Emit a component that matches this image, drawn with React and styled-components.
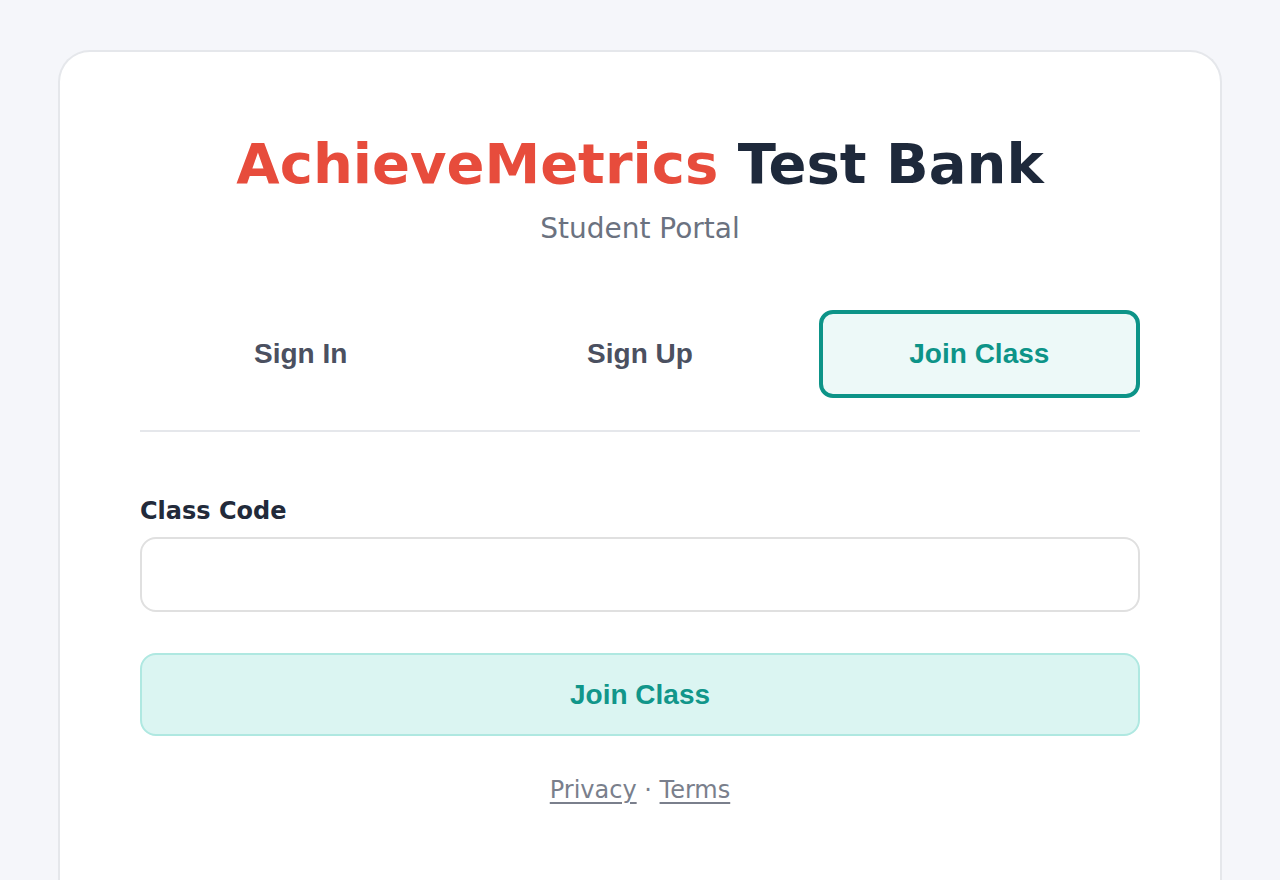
import React, { useState } from 'react'
import styled, { createGlobalStyle } from 'styled-components';

const GlobalStyle = createGlobalStyle`
  html, body {
    margin: 0;
    padding: 0;
    background: #f5f6fa;
  }
  body {
    font-family: "DejaVu Sans", "Liberation Sans", sans-serif;
  }
`;

const Page = styled.div`
  min-height: 880px;
  padding: 50px 58px 0;
  box-sizing: border-box;
`;

const Card = styled.div`
  background: #ffffff;
  border: 2px solid #e5e7eb;
  border-bottom: none;
  border-radius: 32px 32px 0 0;
  padding: 79px 80px 80px;
  min-height: 830px;
  box-sizing: border-box;
`;

const Header = styled.header`
  text-align: center;
`;

const Title = styled.h1`
  margin: 0;
  font-family: "DejaVu Sans", sans-serif;
  font-weight: 700;
  font-size: 56px;
  line-height: 65px;
  color: #1e293b;
`;

const Brand = styled.span`
  color: #e74c3c;
`;

const Subtitle = styled.p`
  margin: 16px 0 0;
  font-size: 28px;
  line-height: 33px;
  color: #6b7280;
`;

const Tabs = styled.div`
  display: grid;
  grid-template-columns: repeat(3, 1fr);
  gap: 18px;
  margin-top: 65px;
  padding-bottom: 32px;
  border-bottom: 2px solid #e5e7eb;
`;

const Tab = styled.button`
  height: 88px;
  box-sizing: border-box;
  border: 4px solid ${(p) => (p.$active ? '#0d9488' : 'transparent')};
  border-radius: 14px;
  background: ${(p) => (p.$active ? '#edf9f8' : 'transparent')};
  color: ${(p) => (p.$active ? '#0d9488' : '#4b5060')};
  font-family: "Liberation Sans", Arial, sans-serif;
  font-weight: 700;
  font-size: 28px;
  cursor: pointer;
`;

const Form = styled.form`
  display: flex;
  flex-direction: column;
  margin-top: 65px;
`;

const Label = styled.label`
  font-weight: 700;
  font-size: 24px;
  line-height: 28px;
  color: #222a3a;
  margin-bottom: 12px;
`;

const Input = styled.input`
  height: 75px;
  box-sizing: border-box;
  border: 2px solid #e0e0e0;
  border-radius: 16px;
  padding: 0 22px;
  font-size: 24px;
  font-family: "DejaVu Sans", sans-serif;
  outline: none;
`;

const Submit = styled.button`
  margin-top: 41px;
  height: 83px;
  box-sizing: border-box;
  border: 2px solid #afe8e1;
  border-radius: 16px;
  background: #dbf5f2;
  color: #11968a;
  font-family: "Liberation Sans", Arial, sans-serif;
  font-weight: 700;
  font-size: 28px;
  cursor: pointer;
`;

const Footer = styled.div`
  margin-top: 40px;
  text-align: center;
  font-size: 24px;
  line-height: 28px;
  color: #7a7f8c;
`;

const FooterLink = styled.a`
  color: #7a7f8c;
  text-decoration: underline;
  text-underline-offset: 4px;
`;

const tabs = ['Sign In', 'Sign Up', 'Join Class'];

const App = () => {
  const [active, setActive] = useState('Join Class');

  return (
    <>
      <GlobalStyle />
      <Page>
        <Card>
          <Header>
            <Title>
              <Brand>AchieveMetrics</Brand> Test Bank
            </Title>
            <Subtitle>Student Portal</Subtitle>
          </Header>
          <Tabs>
            {tabs.map((t) => (
              <Tab key={t} $active={active === t} onClick={() => setActive(t)}>
                {t}
              </Tab>
            ))}
          </Tabs>
          <Form onSubmit={(e) => e.preventDefault()}>
            <Label htmlFor="code">Class Code</Label>
            <Input id="code" />
            <Submit type="submit">Join Class</Submit>
          </Form>
          <Footer>
            <FooterLink href="#">Privacy</FooterLink> · <FooterLink href="#">Terms</FooterLink>
          </Footer>
        </Card>
      </Page>
    </>
  )
}

export default App
